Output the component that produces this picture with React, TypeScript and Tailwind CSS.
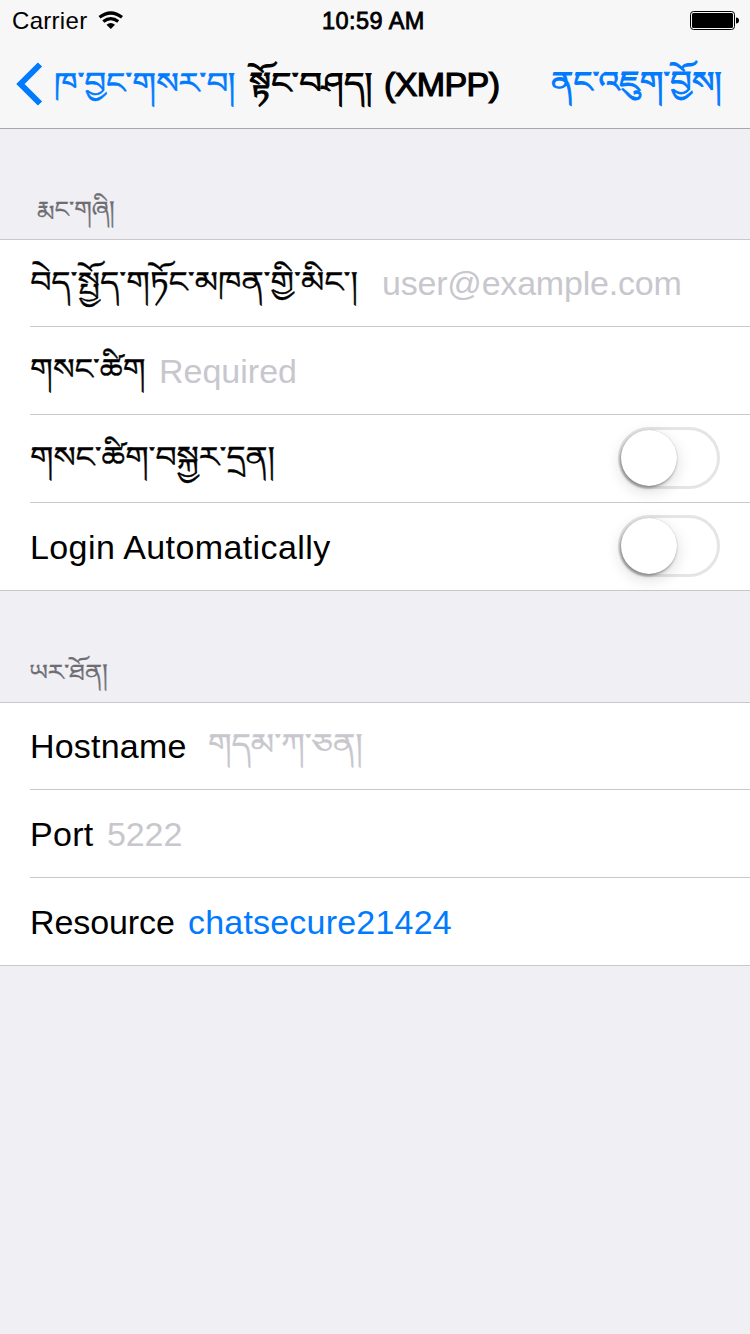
import type { ReactNode } from 'react';

function Tibetan({ children, className = '' }: { children: ReactNode; className?: string }) {
  return (
    <span className={`inline-block origin-left font-['Noto_Serif_Tibetan',serif] leading-[44px] ${className}`}>
      {children}
    </span>
  );
}

function Switch() {
  return (
    <div className="mr-[30px] mb-[1px] ml-auto h-[62px] w-[102px] rounded-full border-[3px] border-[#e5e5e5] bg-white">
      <div className="h-[56px] w-[56px] rounded-full bg-white shadow-[0_0_1px_rgba(0,0,0,0.25),-1px_2px_3px_rgba(0,0,0,0.35),0_5px_16px_rgba(0,0,0,0.15)]" />
    </div>
  );
}

function Row({ children, position = 'middle' }: { children: ReactNode; position?: 'first' | 'middle' | 'last' }) {
  const heights = {
    first: 'h-[87px] border-b',
    middle: 'h-[88px] border-b',
    last: 'h-[87px]',
  };
  return (
    <div className="bg-white pl-[30px]">
      <div className={`flex items-center border-[#c8c7cc] ${heights[position]}`}>{children}</div>
    </div>
  );
}

export default function App() {
  return (
    <div className="h-[1334px] w-[750px] overflow-hidden bg-[#efeff4] font-['Liberation_Sans',sans-serif] text-[34px] whitespace-nowrap text-black">
      <header className="h-[129px] border-b border-[#a7a7aa] bg-[#f7f7f7]">
        <div className="flex h-[40px] items-center pl-[12px] text-[24px]">
          <span className="w-[86px] pt-[2px] tracking-[0.300px]">Carrier</span>
          <svg width="26" height="18" viewBox="0 0 26 18" fill="none" stroke="#000">
            <path d="M1.500 6.300Q12.800 -2.300 24 6.300" strokeWidth="3.200" />
            <path d="M5.300 10.500Q12.800 4.700 20.200 10.500" strokeWidth="3.200" />
            <path d="M8.500 13.800Q12.800 10.200 17 13.800L12.800 18Z" fill="#000" stroke="none" />
          </svg>
          <span className="ml-[198px] w-[104px] pt-[4px] text-[23.500px] tracking-[0.450px] [-webkit-text-stroke:0.800px_black]">10:59 AM</span>
          <svg className="ml-[264px]" width="50" height="20" viewBox="0 0 50 20">
            <rect x="0.500" y="1.500" width="44" height="18" rx="3" fill="none" stroke="#000" />
            <rect x="2" y="3" width="41" height="15" rx="1.500" />
            <path d="M46 7.500q3 0 3 3t-3 3z" />
          </svg>
        </div>
        <div className="flex h-[88px] items-center">
          <svg className="ml-[16px]" width="28" height="44" viewBox="0 0 28 44" fill="none" stroke="#007aff" strokeWidth="6">
            <path d="M24 2.500L4.500 22L24 41.500" />
          </svg>
          <div className="ml-[10px] w-[195px] text-[#007aff]">
            <Tibetan className="scale-x-[1.155] pt-[12px] text-[29px] [-webkit-text-stroke:0.600px_#007aff]">ཁ་བྱང་གསར་བ།</Tibetan>
          </div>
          <div className="w-[135px]">
            <Tibetan className="scale-x-[1.220] pt-[12px] text-[29px] [-webkit-text-stroke:0.900px_black]">སྟོང་བཤད།</Tibetan>
          </div>
          <span className="w-[167px] text-[34px] tracking-[-0.600px] [-webkit-text-stroke:1.200px_black]">(XMPP)</span>
          <Tibetan className="scale-x-[1.150] pt-[12px] text-[29px] text-[#007aff] [-webkit-text-stroke:0.900px_#007aff]">ནང་འཇུག་བྱོས།</Tibetan>
        </div>
      </header>
      <div className="flex h-[110px] items-end pb-[1px] pl-[37px] text-[#6d6d72]">
        <Tibetan className="scale-x-[1.110] text-[22.500px] [-webkit-text-stroke:0.300px_#6d6d72]">རྨང་གཞི།</Tibetan>
      </div>
      <section className="border-y border-[#c8c7cc]">
        <Row position="first">
          <div className="w-[352px]">
            <Tibetan className="scale-x-[1.147] pt-[11px] text-[29px] [-webkit-text-stroke:0.400px_black]">བེད་སྤྱོད་གཏོང་མཁན་གྱི་མིང་།</Tibetan>
          </div>
          <span className="tracking-[-0.200px] text-[#c7c7cd]">user@example.com</span>
        </Row>
        <Row>
          <div className="w-[129px]">
            <Tibetan className="scale-x-[1.110] pt-[12px] text-[29px] [-webkit-text-stroke:0.400px_black]">གསང་ཚིག</Tibetan>
          </div>
          <span className="pt-[2px] text-[#c7c7cd]">Required</span>
        </Row>
        <Row>
          <Tibetan className="scale-x-[1.140] pt-[12px] text-[29px] [-webkit-text-stroke:0.400px_black]">གསང་ཚིག་བསྐྱར་དྲན།</Tibetan>
          <Switch />
        </Row>
        <Row position="last">
          <span className="pt-[2px] tracking-[0.400px]">Login Automatically</span>
          <Switch />
        </Row>
      </section>
      <div className="flex h-[111px] items-end pb-[1px] pl-[29px] text-[#6d6d72]">
        <Tibetan className="scale-x-[1.150] text-[22.500px] [-webkit-text-stroke:0.300px_#6d6d72]">ཡར་ཐོན།</Tibetan>
      </div>
      <section className="border-y border-[#c8c7cc]">
        <Row position="first">
          <span className="w-[178px] tracking-[0.200px]">Hostname</span>
          <Tibetan className="scale-x-[1.150] pt-[11px] text-[29px] text-[#c7c7cd] [-webkit-text-stroke:0.400px_#c7c7cd]">གདམ་ཀ་ཅན།</Tibetan>
        </Row>
        <Row>
          <span className="w-[77px] pt-[2px] tracking-[0.300px]">Port</span>
          <span className="pt-[2px] tracking-[-0.100px] text-[#c7c7cd]">5222</span>
        </Row>
        <Row position="last">
          <span className="w-[158px] pt-[2px] tracking-[-0.100px]">Resource</span>
          <span className="pt-[2px] tracking-[0.200px] text-[#007aff]">chatsecure21424</span>
        </Row>
      </section>
    </div>
  );
}
